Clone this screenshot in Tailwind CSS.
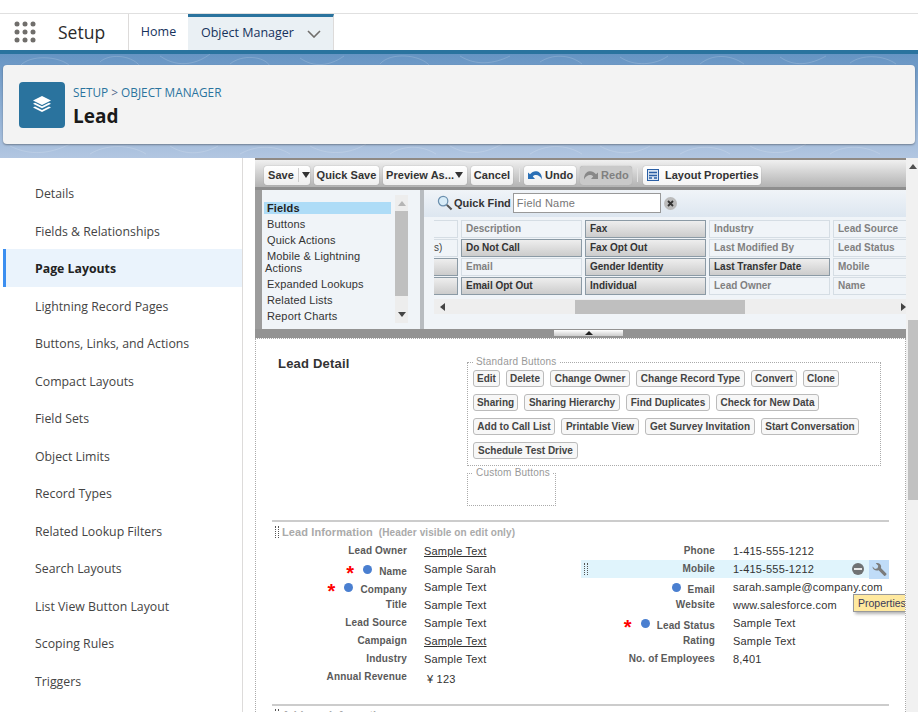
<!DOCTYPE html>
<html lang="en">
<head>
<meta charset="UTF-8" />
<title>Lead Page Layout</title>
<script src="https://cdn.jsdelivr.net/npm/@tailwindcss/browser@4"></script>
</head>
<body class="bg-white">
<div class="w-[918px] h-[712px] overflow-hidden font-['Liberation_Sans',sans-serif] bg-white">

  <!-- Top nav -->
  <div class="h-[14px] bg-white border-b border-[#e0e0e0]"></div>
  <div class="h-[36px] bg-white flex font-['Open_Sans',sans-serif]">
    <div class="w-[129px] flex items-center border-r border-[#dddbda]">
      <svg class="ml-[14px]" width="22" height="22" viewBox="0 0 22 22" fill="#706e6b"><circle cx="3" cy="3" r="2.5"/><circle cx="11" cy="3" r="2.5"/><circle cx="19" cy="3" r="2.5"/><circle cx="3" cy="11" r="2.5"/><circle cx="11" cy="11" r="2.5"/><circle cx="19" cy="11" r="2.5"/><circle cx="3" cy="19" r="2.5"/><circle cx="11" cy="19" r="2.5"/><circle cx="19" cy="19" r="2.5"/></svg>
      <span class="ml-[22px] text-[17.5px] text-[#2b2b2b]">Setup</span>
    </div>
    <div class="w-[59px] flex items-center justify-center text-[12.5px] text-[#16325c]">Home</div>
    <div class="w-[146px] flex items-center bg-[#eaf0f4] border-t-[3px] border-[#2a739e] border-r border-r-[#dddbda] pl-[13px] text-[12.5px] text-[#16325c]">
      <span>Object Manager</span>
      <svg class="ml-[13px]" width="14" height="8" viewBox="0 0 14 8" fill="none" stroke="#706e6b" stroke-width="1.6"><path d="M1 1l6 6 6-6"/></svg>
    </div>
  </div>
  <div class="h-[4px] bg-[#2a739e]"></div>

  <!-- Page header on the contour background -->
  <div class="relative h-[104px] pt-[11px] bg-gradient-to-b from-[#6694c3] to-[#b2c6e1] overflow-hidden">
    <svg class="absolute left-0 top-0" width="918" height="104" viewBox="0 0 918 104" fill="none" stroke="white" stroke-opacity="0.16">
      <path d="M20 12c10-12 40-10 50 0M100 8c8-8 30-8 40 4M160 2c20 14 40 6 50-2M230 10c12-10 34-8 40 2 4 6-10 8-20 0M300 4c14 10 30 8 44-2M380 10c10-12 40-10 50 2M460 2c16 10 34 8 50 0M540 8c12-8 30-8 42 2M620 3c14 10 36 8 48-1M700 10c12-10 30-10 44 0M780 3c14 10 30 8 46-1M850 9c12-9 34-8 46 1"/>
      <path d="M10 92c20 10 40 8 60-2M90 100c16-10 40-10 56 0M170 92c12 8 30 10 48 0M240 100c14-8 34-10 50 0M310 92c18 10 40 8 56-2M390 100c12-8 30-10 46 0M450 92c18 10 34 8 52-2M530 100c16-10 36-10 52 0M600 92c14 8 32 10 50 0M680 100c14-8 34-10 50 0M750 92c18 10 40 8 56-2M830 100c12-8 32-10 50 0"/>
    </svg>
    <div class="relative mx-[3px] h-[79px] bg-[#f3f3f3] rounded-[4px] shadow-[0_1px_2px_rgba(0,0,0,0.35)] flex items-center pl-[16px]">
      <div class="w-[46px] h-[46px] rounded-[4px] bg-[#2a739e] flex items-center justify-center">
        <svg width="22" height="20" viewBox="0 0 22 20" fill="white"><path d="M11 1l9 4.5-9 4.5-9-4.5z"/><path d="M2 8.7l2-1 7 3.5 7-3.5 2 1-9 4.5z"/><path d="M2 12.5l2-1 7 3.5 7-3.5 2 1-9 4.5z"/></svg>
      </div>
      <div class="ml-[8px] pt-[4px] font-['Open_Sans',sans-serif]">
        <div class="text-[11.8px] leading-[16px] text-[#2a739e]">SETUP <span class="text-[#54698d]">&gt;</span> OBJECT MANAGER</div>
        <div class="mt-[2px] text-[19px] leading-[28px] font-bold text-[#1a1a1a]">Lead</div>
      </div>
    </div>
  </div>

  <!-- Body -->
  <div class="ml-[3px] h-[554px] bg-white flex">
    <nav class="w-[240px] shrink-0 pt-[16px] border-r border-[#dddbda] text-[12.3px] text-[#444] font-['Open_Sans',sans-serif]">
      <a class="flex items-center h-[37.5px] pt-[3px] pl-[32px]">Details</a>
      <a class="flex items-center h-[37.5px] pt-[3px] pl-[32px]">Fields &amp; Relationships</a>
      <a class="flex items-center h-[37.5px] pt-[3px] pl-[29px] border-l-[3px] border-[#3b8ef0] bg-[#eaf3fc] font-bold text-[#222]">Page Layouts</a>
      <a class="flex items-center h-[37.5px] pt-[3px] pl-[32px]">Lightning Record Pages</a>
      <a class="flex items-center h-[37.5px] pt-[3px] pl-[32px]">Buttons, Links, and Actions</a>
      <a class="flex items-center h-[37.5px] pt-[3px] pl-[32px]">Compact Layouts</a>
      <a class="flex items-center h-[37.5px] pt-[3px] pl-[32px]">Field Sets</a>
      <a class="flex items-center h-[37.5px] pt-[3px] pl-[32px]">Object Limits</a>
      <a class="flex items-center h-[37.5px] pt-[3px] pl-[32px]">Record Types</a>
      <a class="flex items-center h-[37.5px] pt-[3px] pl-[32px]">Related Lookup Filters</a>
      <a class="flex items-center h-[37.5px] pt-[3px] pl-[32px]">Search Layouts</a>
      <a class="flex items-center h-[37.5px] pt-[3px] pl-[32px]">List View Button Layout</a>
      <a class="flex items-center h-[37.5px] pt-[3px] pl-[32px]">Scoping Rules</a>
      <a class="flex items-center h-[37.5px] pt-[3px] pl-[32px]">Triggers</a>
    </nav>

    <main class="flex-1 flex min-w-0">
      <div class="w-[663px] pl-[12px] shrink-0">

        <!-- Palette -->
        <div class="w-[651px] h-[180px] bg-[#f0f4f8] border-t-2 border-[#8f8a85] flex flex-col">
          <div class="h-[30px] shrink-0 pt-[3px] bg-gradient-to-b from-[#f0f0f0] to-[#b3b3b3] border-b-[3px] border-[#8e8e8e] flex items-center pl-[9px] gap-[4px] text-[11px] font-bold text-[#333] tracking-[0.05px]">
            <span class="h-[19px] w-[46px] bg-gradient-to-b from-white to-[#eee] rounded-[3px] shadow-[0_0_1px_#777] flex items-center pl-[4px]">Save<span class="ml-[4px] h-[14px] border-l border-[#ccc] pl-[3px] flex items-center"><svg width="8" height="6" viewBox="0 0 8 6" fill="#333"><path d="M0 0h8L4 6z"/></svg></span></span>
            <span class="h-[19px] w-[65px] justify-center bg-gradient-to-b from-white to-[#eee] rounded-[3px] shadow-[0_0_1px_#777] flex items-center">Quick Save</span>
            <span class="h-[19px] w-[84px] pl-[3px] bg-gradient-to-b from-white to-[#eee] rounded-[3px] shadow-[0_0_1px_#777] flex items-center whitespace-nowrap">Preview As...<svg class="ml-[1px]" width="8" height="6" viewBox="0 0 8 6" fill="#333"><path d="M0 0h8L4 6z"/></svg></span>
            <span class="h-[19px] w-[42px] justify-center bg-gradient-to-b from-white to-[#eee] rounded-[3px] shadow-[0_0_1px_#777] flex items-center">Cancel</span>
            <span class="w-px h-[14px] bg-[#e4e4e4] mx-[2px] -mr-[1px]"></span>
            <span class="h-[19px] w-[52px] pl-[3px] ml-[1px] bg-gradient-to-b from-white to-[#eee] rounded-[3px] shadow-[0_0_1px_#777] flex items-center gap-[2px]"><svg width="16" height="13" viewBox="0 0 16 13"><path d="M1 10V3.500l2 1.800C5 3 7 2 9.500 2.300 13 2.800 15 6 15 10.500c-1.500-3-3.500-4.500-6-4.500-1.300 0-2.400.5-3.200 1.400L8 10z" fill="#2a6fb5"/></svg>Undo</span>
            <span class="h-[19px] w-[52px] pl-[3px] bg-[#c9c9c9] rounded-[3px] shadow-[0_0_1px_#999] flex items-center gap-[2px] text-[#808080]"><svg width="16" height="13" viewBox="0 0 16 13"><path d="M15 10V3.500l-2 1.800C11 3 9 2 6.500 2.300 3 2.800 1 6 1 10.500c1.500-3 3.500-4.500 6-4.500 1.300 0 2.400.5 3.200 1.400L8 10z" fill="#888"/></svg>Redo</span>
            <span class="w-px h-[14px] bg-[#e4e4e4] mx-[1px]"></span>
            <span class="h-[19px] w-[118px] pl-[4px] bg-gradient-to-b from-white to-[#f4f4f4] rounded-[3px] shadow-[0_0_1px_#777] flex items-center gap-[6px] tracking-normal"><svg width="12" height="12" viewBox="0 0 12 12"><rect x=".5" y=".5" width="11" height="11" fill="#dbe6f3" stroke="#2a5fa5"/><path d="M2 3.500h8M2 6.500h8M2 9h3M7 9h3" stroke="#2a5fa5" stroke-width="1.400"/></svg>Layout Properties</span>
          </div>

          <div class="flex-1 flex min-h-0 border-l-[7px] border-[#9c9c9c]">
            <!-- Palette categories -->
            <div class="w-[158px] shrink-0 flex pl-[2px] pt-[5px]">
              <div class="w-[127px] pt-[7px] text-[11px] leading-[16px] text-[#333] tracking-[0.15px]">
                <div class="bg-[#aedcf7] font-bold text-[#222] pl-[3px] h-[12px] leading-[12px] mb-[2px]">Fields</div>
                <div class="pl-[3px]">Buttons</div>
                <div class="pl-[3px]">Quick Actions</div>
                <div class="leading-[12px] py-[2px]"><span class="pl-[3px]">Mobile &amp; Lightning</span><br /><span class="pl-[1px]">Actions</span></div>
                <div class="pl-[3px]">Expanded Lookups</div>
                <div class="pl-[3px]">Related Lists</div>
                <div class="pl-[3px]">Report Charts</div>
              </div>
              <div class="ml-[4px] w-[13px] h-[128px] bg-[#ededed] flex flex-col items-center">
                <svg class="mt-[6px] mb-[5px]" width="8" height="5" viewBox="0 0 8 5" fill="#b5b5b5"><path d="M4 0l4 5H0z"/></svg>
                <div class="w-full h-[85px] bg-[#bfbfbf]"></div>
                <svg class="mt-[16px]" width="8" height="5" viewBox="0 0 8 5" fill="#444"><path d="M0 0h8L4 5z"/></svg>
              </div>
            </div>
            <div class="w-[4px] shrink-0 bg-[#b8bcc0]"></div>

            <!-- Palette items -->
            <div class="flex-1 min-w-0 overflow-hidden">
              <div class="h-[27px] flex items-center bg-gradient-to-b from-[#f0f4f8] to-[#dde6f0] text-[11px] pl-[13px] pb-[1px]">
                <svg width="16" height="16" viewBox="0 0 17 17" fill="none"><circle cx="6.500" cy="6.500" r="5" fill="#d8ecf8" stroke="#6b8fae" stroke-width="1.300"/><path d="M10.500 10.500l5 5" stroke="#555" stroke-width="2.200"/></svg>
                <span class="ml-[1px] font-bold text-[#333] whitespace-nowrap">Quick Find</span>
                <span class="ml-[2px] w-[148px] h-[20px] bg-white border border-[#999] pl-[3px] leading-[18px] text-[#777] tracking-[0.2px]">Field Name</span>
                <span class="ml-[3px] w-[13px] h-[13px] rounded-full bg-[#bbb] flex items-center justify-center"><svg width="7" height="7" viewBox="0 0 7 7" stroke="#333" stroke-width="1.800"><path d="M1 1l5 5M6 1L1 6"/></svg></span>
              </div>
              <div class="pl-[10px] pt-[3px]">
                <div class="grid grid-cols-[24px_121px_121px_121px_90px] gap-x-[3px] gap-y-[1px] text-[10px] font-bold leading-[15px] whitespace-nowrap">
                  <span class="h-[18px] border-y border-r border-[#d5dde4]"></span>
                  <span class="h-[18px] border border-[#d5dde4] text-[#808080] pl-[4px]">Description</span>
                  <span class="h-[18px] border border-[#8b9aa5] bg-gradient-to-b from-[#eee] to-[#ccc] text-[#333] pl-[4px]">Fax</span>
                  <span class="h-[18px] border border-[#d5dde4] text-[#808080] pl-[4px]">Industry</span>
                  <span class="h-[18px] border border-[#d5dde4] text-[#808080] pl-[4px]">Lead Source</span>

                  <span class="h-[18px] border-y border-r border-[#d5dde4] text-[#444] font-normal">s)</span>
                  <span class="h-[18px] border border-[#8b9aa5] bg-gradient-to-b from-[#eee] to-[#ccc] text-[#333] pl-[4px]">Do Not Call</span>
                  <span class="h-[18px] border border-[#8b9aa5] bg-gradient-to-b from-[#eee] to-[#ccc] text-[#333] pl-[4px]">Fax Opt Out</span>
                  <span class="h-[18px] border border-[#d5dde4] text-[#808080] pl-[4px]">Last Modified By</span>
                  <span class="h-[18px] border border-[#d5dde4] text-[#808080] pl-[4px]">Lead Status</span>

                  <span class="h-[18px] border-y border-r border-[#8b9aa5] bg-gradient-to-b from-[#eee] to-[#ccc]"></span>
                  <span class="h-[18px] border border-[#d5dde4] text-[#808080] pl-[4px]">Email</span>
                  <span class="h-[18px] border border-[#8b9aa5] bg-gradient-to-b from-[#eee] to-[#ccc] text-[#333] pl-[4px]">Gender Identity</span>
                  <span class="h-[18px] border border-[#8b9aa5] bg-gradient-to-b from-[#eee] to-[#ccc] text-[#333] pl-[4px]">Last Transfer Date</span>
                  <span class="h-[18px] border border-[#d5dde4] text-[#808080] pl-[4px]">Mobile</span>

                  <span class="h-[18px] border-y border-r border-[#8b9aa5] bg-gradient-to-b from-[#eee] to-[#ccc]"></span>
                  <span class="h-[18px] border border-[#8b9aa5] bg-gradient-to-b from-[#eee] to-[#ccc] text-[#333] pl-[4px]">Email Opt Out</span>
                  <span class="h-[18px] border border-[#8b9aa5] bg-gradient-to-b from-[#eee] to-[#ccc] text-[#333] pl-[4px]">Individual</span>
                  <span class="h-[18px] border border-[#d5dde4] text-[#808080] pl-[4px]">Lead Owner</span>
                  <span class="h-[18px] border border-[#d5dde4] text-[#808080] pl-[4px]">Name</span>
                </div>
                <!-- horizontal scroll -->
                <div class="mt-[4px] h-[15px] bg-[#eeeeee] flex items-center relative">
                  <svg class="ml-[6px]" width="5" height="8" viewBox="0 0 5 8" fill="#444"><path d="M5 0v8L0 4z"/></svg>
                  <div class="ml-[130px] w-[170px] h-[14px] bg-[#bfbfbf]"></div>
                  <svg class="ml-auto mr-0" width="5" height="8" viewBox="0 0 5 8" fill="#444"><path d="M0 0v8l5-4z"/></svg>
                </div>
              </div>
            </div>
          </div>

          <div class="h-[9px] shrink-0 bg-[#939393] flex pl-[299px]">
            <span class="w-[69px] h-[6px] mt-[1px] bg-gradient-to-b from-[#fff] to-[#ccc] flex items-center justify-center"><svg width="8" height="4" viewBox="0 0 8 4" fill="#222"><path d="M4 0l4 4H0z"/></svg></span>
          </div>
        </div>

        <!-- Layout canvas -->
        <div class="w-[651px] h-[374px] border-l border-r border-t border-dotted border-[#aaa] pl-[16px] pt-[16px] overflow-hidden text-[11px]">
          <div class="flex">
            <div class="w-[195px] pl-[6px] pt-[1px] shrink-0 text-[13px] leading-[16px] font-bold text-[#333] tracking-[0.2px]">Lead Detail</div>
            <div>
              <div class="relative mt-[7px] w-[414px] h-[104px] border border-dotted border-[#aaa] pl-[5px] pt-[7px] text-[10px] font-bold text-[#444]">
                <span class="absolute left-[5px] -top-[7px] bg-white px-[3px] text-[10px] leading-[12px] font-normal text-[#999] tracking-[0.2px]">Standard Buttons</span>
                <div class="flex gap-[6px] h-[17px] mb-[7px]">
                  <span class="w-[27px] flex items-center justify-center border border-[#bbb] rounded-[3px] bg-[#f7f7f7]">Edit</span>
                  <span class="w-[38px] flex items-center justify-center border border-[#bbb] rounded-[3px] bg-[#f7f7f7]">Delete</span>
                  <span class="w-[80px] flex items-center justify-center border border-[#bbb] rounded-[3px] bg-[#f7f7f7]">Change Owner</span>
                  <span class="w-[109px] flex items-center justify-center border border-[#bbb] rounded-[3px] bg-[#f7f7f7]">Change Record Type</span>
                  <span class="w-[46px] flex items-center justify-center border border-[#bbb] rounded-[3px] bg-[#f7f7f7]">Convert</span>
                  <span class="w-[36px] flex items-center justify-center border border-[#bbb] rounded-[3px] bg-[#f7f7f7]">Clone</span>
                </div>
                <div class="flex gap-[6px] h-[17px] mb-[7px]">
                  <span class="w-[45px] flex items-center justify-center border border-[#bbb] rounded-[3px] bg-[#f7f7f7]">Sharing</span>
                  <span class="w-[96px] flex items-center justify-center border border-[#bbb] rounded-[3px] bg-[#f7f7f7]">Sharing Hierarchy</span>
                  <span class="w-[84px] flex items-center justify-center border border-[#bbb] rounded-[3px] bg-[#f7f7f7]">Find Duplicates</span>
                  <span class="w-[103px] flex items-center justify-center border border-[#bbb] rounded-[3px] bg-[#f7f7f7]">Check for New Data</span>
                </div>
                <div class="flex gap-[6px] h-[17px] mb-[7px]">
                  <span class="w-[82px] flex items-center justify-center border border-[#bbb] rounded-[3px] bg-[#f7f7f7]">Add to Call List</span>
                  <span class="w-[78px] flex items-center justify-center border border-[#bbb] rounded-[3px] bg-[#f7f7f7]">Printable View</span>
                  <span class="w-[110px] flex items-center justify-center border border-[#bbb] rounded-[3px] bg-[#f7f7f7]">Get Survey Invitation</span>
                  <span class="w-[98px] flex items-center justify-center border border-[#bbb] rounded-[3px] bg-[#f7f7f7]">Start Conversation</span>
                </div>
                <div class="flex gap-[6px] h-[17px]">
                  <span class="w-[105px] flex items-center justify-center border border-[#bbb] rounded-[3px] bg-[#f7f7f7]">Schedule Test Drive</span>
                </div>
              </div>
              <div class="relative mt-[7px] w-[89px] h-[33px] border border-dotted border-[#aaa]">
                <span class="absolute left-[5px] -top-[7px] bg-white px-[3px] text-[10px] leading-[12px] text-[#999] tracking-[0.2px] whitespace-nowrap">Custom Buttons</span>
              </div>
            </div>
          </div>

          <!-- Lead Information section -->
          <div class="mt-[14px] w-[617px] border-t-2 border-[#ccc]">
            <div class="h-[20px] flex items-center pl-[3px] font-bold text-[#aaa]">
              <span class="w-[4px] h-[12px] border-x border-dotted border-[#555] mr-[3px]"></span>
              <span class="text-[11px] tracking-[0.1px]">Lead Information</span>
              <span class="ml-[6px] text-[10px] tracking-[0.1px]">(Header visible on edit only)</span>
            </div>
            <div class="grid grid-cols-[309px_308px] text-[#333] leading-[18px] tracking-[0.2px]">
              <div>
                <div class="flex h-[18px]"><span class="w-[135px] text-right text-[10px] font-bold text-[#5a5a5a] tracking-[0.15px]">Lead Owner</span><span class="ml-[17px] underline">Sample Text</span></div>
                <div class="flex h-[18px]"><span class="w-[135px] flex justify-end items-center text-[10px] font-bold text-[#5a5a5a] tracking-[0.15px]"><span class="mr-[9px] text-[20px] text-[#f00] mt-[8px]">*</span><span class="w-[9px] h-[9px] rounded-full bg-[#4a7fd0] mr-[7px]"></span><span class="pt-[6px]">Name</span></span><span class="ml-[17px]">Sample Sarah</span></div>
                <div class="flex h-[18px]"><span class="w-[135px] flex justify-end items-center text-[10px] font-bold text-[#5a5a5a] tracking-[0.15px]"><span class="mr-[9px] text-[20px] text-[#f00] mt-[8px]">*</span><span class="w-[9px] h-[9px] rounded-full bg-[#4a7fd0] mr-[7px]"></span><span class="pt-[6px]">Company</span></span><span class="ml-[17px]">Sample Text</span></div>
                <div class="flex h-[18px]"><span class="w-[135px] text-right text-[10px] font-bold text-[#5a5a5a] tracking-[0.15px]">Title</span><span class="ml-[17px]">Sample Text</span></div>
                <div class="flex h-[18px]"><span class="w-[135px] text-right text-[10px] font-bold text-[#5a5a5a] tracking-[0.15px]">Lead Source</span><span class="ml-[17px]">Sample Text</span></div>
                <div class="flex h-[18px]"><span class="w-[135px] text-right text-[10px] font-bold text-[#5a5a5a] tracking-[0.15px]">Campaign</span><span class="ml-[17px] underline">Sample Text</span></div>
                <div class="flex h-[18px]"><span class="w-[135px] text-right text-[10px] font-bold text-[#5a5a5a] tracking-[0.15px]">Industry</span><span class="ml-[17px]">Sample Text</span></div>
                <div class="flex h-[18px]"><span class="w-[135px] text-right text-[10px] font-bold text-[#5a5a5a] tracking-[0.15px]">Annual Revenue</span><span class="ml-[20px] pt-[2px]">¥ 123</span></div>
              </div>
              <div class="relative">
                <div class="flex h-[18px]"><span class="w-[134px] text-right text-[10px] font-bold text-[#5a5a5a] tracking-[0.15px]">Phone</span><span class="ml-[18px]">1-415-555-1212</span></div>
                <div class="flex h-[18px] bg-[#e0f4fc] items-center relative"><span class="absolute left-[3px] top-[3px] w-[4px] h-[12px] border-x border-dotted border-[#555]"></span><span class="w-[134px] text-right text-[10px] font-bold text-[#5a5a5a] tracking-[0.15px]">Mobile</span><span class="ml-[18px]">1-415-555-1212</span>
                  <span class="ml-auto mr-[5px] w-[12px] h-[12px] rounded-full bg-[#6f7274] flex items-center justify-center"><span class="w-[8px] h-[2px] bg-[#e8e8e8]"></span></span>
                  <span class="w-[20px] h-[19px] mt-[1px] bg-[#c0dcf8] flex items-center justify-center"><svg width="16" height="16" viewBox="0 0 16 16"><path d="M1.500 4.500L4 7l2.500-.8.800-2.500L4.800 1.200C7 .3 9.500 1.500 10 3.800c.2.800.1 1.500-.1 2.200l5.400 5.600c.8.900-1.300 3-2.200 2.200L7.600 8.300c-2.800 1-6.300-.7-6.100-3.800z" fill="#7b7b7b"/></svg></span>
                </div>
                <div class="flex h-[18px]"><span class="w-[134px] flex justify-end items-center text-[10px] font-bold text-[#5a5a5a] tracking-[0.15px]"><span class="w-[9px] h-[9px] rounded-full bg-[#4a7fd0] mr-[7px]"></span><span class="pt-[6px]">Email</span></span><span class="ml-[18px]">sarah.sample@company.com</span></div>
                <div class="flex h-[18px]"><span class="w-[134px] text-right text-[10px] font-bold text-[#5a5a5a] tracking-[0.15px]">Website</span><span class="ml-[18px]">www.salesforce.com</span></div>
                <div class="flex h-[18px]"><span class="w-[134px] flex justify-end items-center text-[10px] font-bold text-[#5a5a5a] tracking-[0.15px]"><span class="mr-[9px] text-[20px] text-[#f00] mt-[8px]">*</span><span class="w-[9px] h-[9px] rounded-full bg-[#4a7fd0] mr-[7px]"></span><span class="pt-[6px]">Lead Status</span></span><span class="ml-[18px]">Sample Text</span></div>
                <div class="flex h-[18px]"><span class="w-[134px] text-right text-[10px] font-bold text-[#5a5a5a] tracking-[0.15px]">Rating</span><span class="ml-[18px]">Sample Text</span></div>
                <div class="flex h-[18px]"><span class="w-[134px] text-right text-[10px] font-bold text-[#5a5a5a] tracking-[0.15px]">No. of Employees</span><span class="ml-[18px]">8,401</span></div>
                <!-- tooltip -->
                <div class="absolute left-[272px] top-[52px] h-[18px] pl-[4px] pr-[8px] border border-[#999] bg-[#ffe99f] text-[10.5px] leading-[16px] tracking-normal text-[#3a3a5a] shadow-[2px_2px_3px_rgba(0,0,0,0.3)] whitespace-nowrap">Properties</div>
              </div>
            </div>
          </div>

          <!-- next section, cut off by the fold -->
          <div class="mt-[18px] w-[617px] border-t-2 border-[#ccc] pt-[3px] flex items-start pl-[3px] font-bold text-[#aaa]">
            <span class="w-[4px] h-[12px] border-x border-dotted border-[#555] mr-[3px]"></span>
            <span class="text-[11px] leading-[12px]">Address Information</span>
          </div>
        </div>
      </div>

      <!-- Page scrollbar -->
      <div class="w-[12px] shrink-0 bg-[#f1f1f1] flex flex-col items-center pl-[2px]">
        <svg class="mt-[6px]" width="8" height="5" viewBox="0 0 8 5" fill="#505050"><path d="M4 0l4 5H0z"/></svg>
        <div class="mt-[151px] w-full h-[180px] bg-[#c1c1c1]"></div>
      </div>
    </main>
  </div>
</div>
</body>
</html>
